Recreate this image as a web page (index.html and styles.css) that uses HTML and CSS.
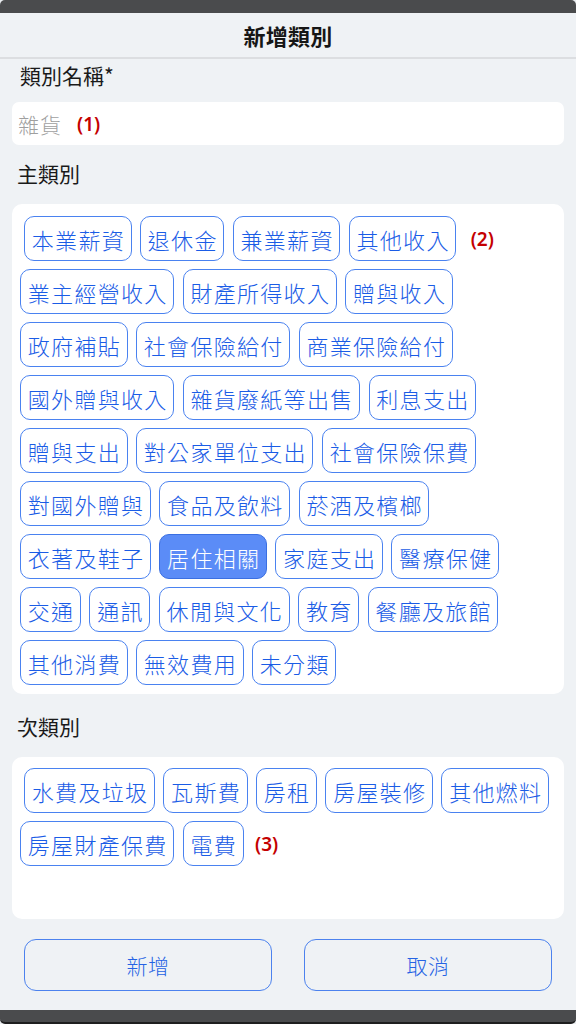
FILE: index.html
```html
<!DOCTYPE html>
<html lang="zh-Hant">
<head>
<meta charset="utf-8">
<title>新增類別</title>
<link rel="stylesheet" href="styles.css">
</head>
<body>
<div class="screen">
  <div class="dialog">
    <header class="dlg-header"><h1 class="dlg-title">新增類別</h1></header>

    <div class="field-label name-label">類別名稱*</div>
    <div class="text-input"><span class="placeholder">雜貨</span><span class="mark input-mark">(1)</span></div>

    <div class="field-label">主類別</div>
    <div class="card main-card">
      <span class="chip first">本業薪資</span>
      <span class="chip">退休金</span>
      <span class="chip">兼業薪資</span>
      <span class="chip">其他收入</span>
      <span class="mark chip-mark mark-2">(2)</span>
      <span class="chip">業主經營收入</span>
      <span class="chip">財產所得收入</span>
      <span class="chip">贈與收入</span>
      <span class="chip">政府補貼</span>
      <span class="chip">社會保險給付</span>
      <span class="chip">商業保險給付</span>
      <span class="chip">國外贈與收入</span>
      <span class="chip">雜貨廢紙等出售</span>
      <span class="chip">利息支出</span>
      <span class="chip">贈與支出</span>
      <span class="chip">對公家單位支出</span>
      <span class="chip">社會保險保費</span>
      <span class="chip">對國外贈與</span>
      <span class="chip">食品及飲料</span>
      <span class="chip">菸酒及檳榔</span>
      <span class="chip">衣著及鞋子</span>
      <span class="chip selected">居住相關</span>
      <span class="chip">家庭支出</span>
      <span class="chip">醫療保健</span>
      <span class="chip">交通</span>
      <span class="chip">通訊</span>
      <span class="chip">休閒與文化</span>
      <span class="chip">教育</span>
      <span class="chip">餐廳及旅館</span>
      <span class="chip">其他消費</span>
      <span class="chip">無效費用</span>
      <span class="chip">未分類</span>
    </div>

    <div class="field-label sub-label">次類別</div>
    <div class="card sub-card">
      <span class="chip first">水費及垃圾</span>
      <span class="chip">瓦斯費</span>
      <span class="chip">房租</span>
      <span class="chip">房屋裝修</span>
      <span class="chip">其他燃料</span>
      <span class="chip">房屋財產保費</span>
      <span class="chip">電費</span>
      <span class="mark chip-mark">(3)</span>
    </div>

    <div class="actions">
      <button class="btn" type="button">新增</button>
      <button class="btn" type="button">取消</button>
    </div>
  </div>
</div>
</body>
</html>
```

FILE: styles.css
```css
* { box-sizing: border-box; }

html, body {
  margin: 0;
  padding: 0;
  background: #e9ecef;
}

body {
  font-family: "Noto Sans CJK TC", "Noto Sans", sans-serif;
  color: #1c1c1c;
}

.screen {
  width: 576px;
  height: 1024px;
  background: #4a4b4d;
  border-radius: 5px;
  border-bottom: 2px solid #1e1e1f;
  padding-top: 13px;
  overflow: hidden;
}

.dialog {
  width: 576px;
  height: 997px;
  background: #eff2f5;
  display: flex;
  flex-direction: column;
}

.dlg-header {
  height: 46px;
  border-bottom: 2px solid #dcdee1;
  display: flex;
  align-items: center;
  justify-content: center;
  flex-shrink: 0;
}

.dlg-title {
  margin: 0;
  font-size: 22px;
  font-weight: 700;
  color: #161616;
  letter-spacing: 0.3px;
  line-height: 1;
}

.field-label {
  font-size: 21px;
  font-weight: 400;
  line-height: 32px;
  height: 32px;
  padding-left: 17px;
  margin: 12px 0 15px;
  color: #1a1a1a;
  flex-shrink: 0;
}

.name-label {
  padding-left: 20px;
  margin: 0 0 11px;
}

.sub-label {
  margin: 16px 0 15px;
}

.text-input {
  height: 43px;
  margin: 0 12px;
  background: #ffffff;
  border-radius: 7px;
  display: flex;
  align-items: center;
  padding-left: 6px;
  flex-shrink: 0;
}

.placeholder {
  font-size: 21px;
  font-weight: 300;
  color: #9f9f9f;
  letter-spacing: 1px;
}

.mark {
  font-family: "Noto Sans", "Open Sans", sans-serif;
  font-weight: 600;
  font-size: 19px;
  color: #c40000;
}

.input-mark {
  margin-left: 15px;
}

.card {
  margin: 0 12px;
  background: #ffffff;
  border-radius: 10px;
  display: flex;
  flex-wrap: wrap;
  align-content: flex-start;
  align-items: center;
  gap: 8px 8.5px;
  flex-shrink: 0;
}

.main-card {
  padding: 12px 4px 9px 8px;
}

.sub-card {
  padding: 11px 4px 9px 8px;
  height: 162px;
}

.chip {
  height: 45px;
  display: inline-flex;
  align-items: center;
  padding: 0 5.5px 0 6.8px;
  border: 1px solid #4a82f0;
  border-radius: 10px;
  font-size: 22px;
  font-weight: 300;
  letter-spacing: 1.3px;
  color: #1a5ce6;
  background: #ffffff;
  white-space: nowrap;
}

.chip.first {
  margin-left: 4px;
}

.chip.selected {
  background: #5b8cf7;
  border-color: #3a6fe2;
  color: #ffffff;
}

.chip-mark {
  margin-left: 3px;
}

.mark-2 {
  margin-left: 6px;
}

.actions {
  margin-top: 20px;
  padding: 0 24px;
  display: flex;
  gap: 32px;
  flex-shrink: 0;
}

.btn {
  flex: 1;
  height: 52px;
  background: transparent;
  border: 1px solid #4c82ee;
  border-radius: 12px;
  font-family: "Noto Sans CJK TC", sans-serif;
  font-size: 21px;
  font-weight: 300;
  color: #2563e4;
  letter-spacing: 0.5px;
  padding: 0;
}
```
